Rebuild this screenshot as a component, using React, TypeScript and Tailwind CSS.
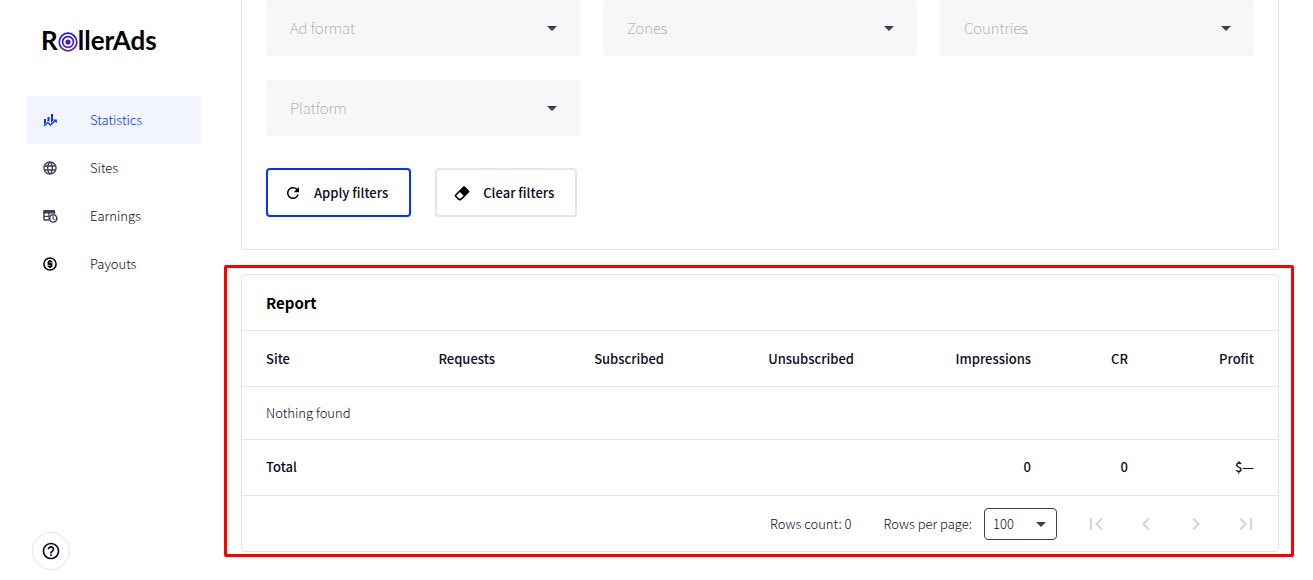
import type { ReactNode } from "react";
import {
  MdArrowDropDown,
  MdChevronLeft,
  MdChevronRight,
  MdFirstPage,
  MdHelpOutline,
  MdLanguage,
  MdLastPage,
  MdRefresh,
} from "react-icons/md";

function StatisticsIcon() {
  return (
    <svg width="16" height="16" viewBox="0 0 16 16" fill="currentColor">
      <path d="M2 7h2v4l-2 1.6zM5.5 5h2v4.6l-.9-.6-1.1.8zM9 2h2v7l-2 1.8z" />
      <path
        d="M2 14l4-3.4L8.4 13l4.8-4.2"
        fill="none"
        stroke="currentColor"
        strokeWidth="1.3"
      />
      <path d="M11 7.4h3.8v3.8z" />
    </svg>
  );
}

function EarningsIcon() {
  return (
    <svg width="16" height="16" viewBox="0 0 16 16" fill="none">
      <path
        d="M2 12.4V3M2 8.4h7M2 12h6M7 4v8M12.4 4v3"
        stroke="currentColor"
        strokeWidth="1.4"
      />
      <path d="M1.3 3a1 1 0 0 1 1-1h9.8a1 1 0 0 1 1 1v2.4H1.3z" fill="currentColor" />
      <circle cx="11.2" cy="10.4" r="4.6" fill="white" />
      <circle cx="11.2" cy="10.4" r="3.6" stroke="currentColor" strokeWidth="1.6" />
      <path d="M11 8.2v2.5l1.8 1.2" stroke="currentColor" strokeWidth="1.1" />
    </svg>
  );
}

function PayoutsIcon() {
  return (
    <svg width="16" height="16" viewBox="0 0 16 16" fill="none">
      <circle cx="8" cy="8" r="6.1" stroke="currentColor" strokeWidth="1.5" />
      <rect x="5.6" y="4.6" width="4.8" height="6.8" rx="1.6" fill="currentColor" />
      <path d="M8 4v8" stroke="currentColor" strokeWidth="1.6" />
      <path d="M7.4 6.7h3M5.6 9.3h3" stroke="white" strokeWidth=".7" />
    </svg>
  );
}

function EraserIcon() {
  return (
    <svg width="18" height="18" viewBox="0 0 24 24" fill="currentColor">
      <path d="M16.24 3.56l4.95 4.94c.78.79.78 2.05 0 2.84L12 20.53a4.01 4.01 0 0 1-5.66 0L2.81 17c-.78-.79-.78-2.05 0-2.84l10.6-10.6c.79-.78 2.05-.78 2.83 0M4.22 15.58l3.54 3.53c.78.79 2.04.79 2.83 0l3.53-3.53-4.95-4.95z" />
    </svg>
  );
}

function Logo() {
  return (
    <a
      href="#"
      className="ml-[41px] mt-6 flex h-8 items-center font-['Lato'] text-[26px] font-bold leading-8 text-black"
    >
      R
      <svg width="20" height="20" viewBox="0 0 20 20" fill="none" className="mt-1">
        <defs>
          <linearGradient id="ring" x1="0" y1="0" x2="0" y2="20" gradientUnits="userSpaceOnUse">
            <stop stopColor="#1010f5" />
            <stop offset="1" stopColor="#6a2c9c" />
          </linearGradient>
        </defs>
        <circle cx="10" cy="10" r="8.8" stroke="url(#ring)" strokeWidth="1.7" />
        <circle cx="10" cy="10" r="5.4" stroke="url(#ring)" strokeWidth="1.7" />
        <circle cx="10" cy="10" r="2.6" fill="url(#ring)" />
      </svg>
      llerAds
    </a>
  );
}

const menu = [
  { label: "Statistics", icon: <StatisticsIcon />, active: true },
  { label: "Sites", icon: <MdLanguage size={16} />, active: false },
  { label: "Earnings", icon: <EarningsIcon />, active: false },
  { label: "Payouts", icon: <PayoutsIcon />, active: false },
];

const filters = ["Ad format", "Zones", "Countries", "Platform"];

const columns = [
  { label: "Site", width: "w-[138px]", total: "Total" },
  { label: "Requests", width: "w-[139px]", total: "" },
  { label: "Subscribed", width: "w-[169px]", total: "" },
  { label: "Unsubscribed", width: "w-[190px]", total: "" },
  { label: "Impressions", width: "w-[177px]", total: "0" },
  { label: "CR", width: "w-[97px]", total: "0" },
  { label: "Profit", width: "w-[126px]", total: "$—" },
];

function Filter({ label }: { label: string }) {
  return (
    <div className="relative">
      <select
        aria-label={label}
        className="h-14 w-full appearance-none rounded bg-[#f7f7f7] px-6 text-[15px] font-thin text-[#8d8f9c]"
      >
        <option>{label}</option>
      </select>
      <MdArrowDropDown
        size={24}
        className="pointer-events-none absolute right-4 top-4 text-[#3b3f5c]"
      />
    </div>
  );
}

function PageButton({ label, children }: { label: string; children: ReactNode }) {
  return (
    <button aria-label={label} className="flex h-12 w-[50px] items-center justify-center">
      {children}
    </button>
  );
}

export default function App() {
  return (
    <div className="flex min-h-screen bg-white font-['Noto_Sans_CJK_SC',sans-serif] text-[13px] font-light leading-5 text-[#0c0c24]">
      {/* Sidebar */}
      <aside className="flex w-[241px] shrink-0 flex-col">
        <Logo />
        <nav className="ml-[26px] mr-10 mt-10 flex flex-col">
          {menu.map((item) => (
            <a
              key={item.label}
              href="#"
              className={
                item.active
                  ? "flex h-12 items-center gap-8 rounded bg-[#f2f4ff] px-4 text-[#0433ff]"
                  : "flex h-12 items-center gap-8 rounded px-4"
              }
            >
              <span className={item.active ? "" : item.label === "Payouts" ? "text-black" : "text-[#3b3f5c]"}>
                {item.icon}
              </span>
              {item.label}
            </a>
          ))}
        </nav>
        <button
          aria-label="Help"
          className="mb-[10px] ml-8 mt-auto flex size-[38px] items-center justify-center rounded-full border border-[#e4e4e6]"
        >
          <MdHelpOutline size={20} />
        </button>
      </aside>

      <main className="mr-[34px] min-w-0 flex-1">
        {/* Filters */}
        <section className="rounded-b border border-t-0 border-[#e5e5e5] px-6 pb-8">
          <div className="grid grid-cols-3 gap-x-[23px] gap-y-6">
            {filters.map((label) => (
              <Filter key={label} label={label} />
            ))}
          </div>
          <div className="mt-8 flex gap-6 font-medium">
            <button className="flex h-[49px] items-center gap-3 rounded border-2 border-[#0433ff] pl-4 pr-[21px]">
              <MdRefresh size={18} className="text-black" />
              Apply filters
            </button>
            <button className="flex h-[49px] items-center gap-3 rounded border-2 border-[#e5e5e5] pl-4 pr-[21px]">
              <span className="text-black">
                <EraserIcon />
              </span>
              Clear filters
            </button>
          </div>
        </section>

        {/* Report */}
        <section className="relative mt-6 rounded border border-[#e5e5e5]">
          <div className="pointer-events-none absolute -bottom-1.5 -left-[18px] -right-4 -top-2.5 rounded-xs border-3 border-[#ff0000]" />
          <h2 className="flex h-14 items-center border-b border-[#e5e5e5] px-6 text-[15px] font-bold text-black">
            Report
          </h2>
          <table className="w-full table-fixed text-right">
            <thead>
              <tr className="h-[55px] border-b border-[#e5e5e5]">
                {columns.map((col) => (
                  <th key={col.label} className={`${col.width} px-6 pt-px font-medium first:text-left`}>
                    {col.label}
                  </th>
                ))}
              </tr>
            </thead>
            <tbody>
              <tr className="h-[53px] border-b border-[#e5e5e5]">
                <td colSpan={7} className="px-6 text-left">
                  Nothing found
                </td>
              </tr>
            </tbody>
            <tfoot>
              <tr className="h-14 border-b border-[#e5e5e5] font-medium">
                {columns.map((col) => (
                  <td key={col.label} className="px-6 first:text-left">
                    {col.total}
                  </td>
                ))}
              </tr>
            </tfoot>
          </table>
          <div className="flex h-[55px] items-center justify-end pr-[7px] pt-px">
            <span>Rows count: 0</span>
            <label htmlFor="rows" className="ml-8">
              Rows per page:
            </label>
            <div className="relative ml-3 mr-[14px]">
              <select
                id="rows"
                className="h-8 w-[73px] appearance-none rounded border border-[#3b3f5c] px-2"
              >
                <option>100</option>
              </select>
              <MdArrowDropDown
                size={24}
                className="pointer-events-none absolute right-1 top-1 text-[#3b3f5c]"
              />
            </div>
            <div className="flex text-[#d4d5da]">
              <PageButton label="First page">
                <MdFirstPage size={24} />
              </PageButton>
              <PageButton label="Previous page">
                <MdChevronLeft size={24} />
              </PageButton>
              <PageButton label="Next page">
                <MdChevronRight size={24} />
              </PageButton>
              <PageButton label="Last page">
                <MdLastPage size={24} />
              </PageButton>
            </div>
          </div>
        </section>
      </main>
    </div>
  );
}
